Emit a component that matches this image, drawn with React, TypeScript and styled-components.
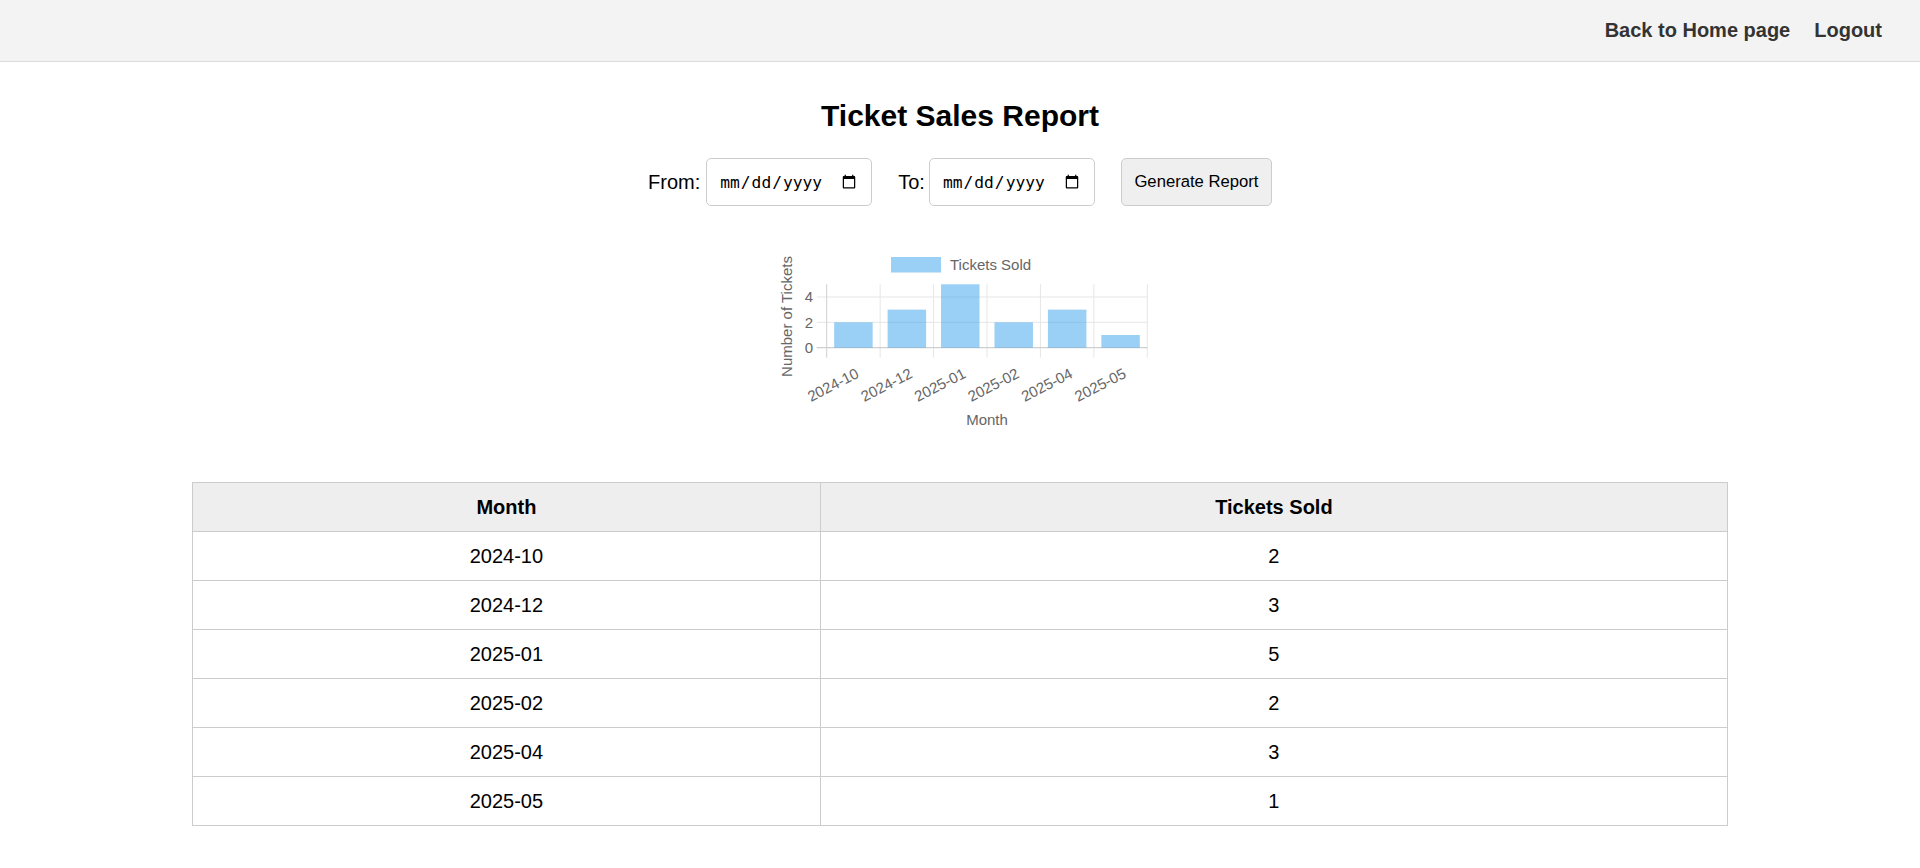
import React from 'react';
import styled, { createGlobalStyle } from 'styled-components';

const GlobalStyle = createGlobalStyle`
  html, body { margin: 0; padding: 0; background: #fff; }
  body { font-family: "Liberation Sans", Arial, Helvetica, sans-serif; color: #000; }
`;

const NavBar = styled.header`
  display: flex;
  justify-content: flex-end;
  align-items: center;
  gap: 24px;
  height: 62px;
  padding: 0 38px 0;
  box-sizing: border-box;
  background: #f3f3f3;
  border-bottom: 1px solid #dcdcdc;
`;

const NavLink = styled.a`
  font-size: 20px;
  font-weight: bold;
  color: #333;
  text-decoration: none;
  cursor: pointer;
`;

const Main = styled.main`
  padding-top: 12px;
  text-align: center;
`;

const Title = styled.h2`
  font-size: 30px;
  font-weight: bold;
  margin: 25px 0;
  line-height: normal;
`;

const FilterRow = styled.div`
  display: flex;
  justify-content: center;
  align-items: center;
`;

const Field = styled.div<{ $gap: number }>`
  display: flex;
  align-items: center;
  gap: ${(p) => p.$gap}px;
  margin-right: 26px;
`;

const FieldLabel = styled.label`
  font-size: 20px;
`;

const DateInput = styled.input`
  width: 166px;
  height: 48px;
  box-sizing: border-box;
  border: 1px solid #ccc;
  border-radius: 5px;
  padding: 0 12px 0 12px;
  font-family: "DejaVu Sans Mono", monospace;
  font-size: 16.25px;
  color: #000;
  background: #fff;
`;

const ActionButton = styled.button`
  height: 48px;
  box-sizing: border-box;
  padding: 0 12.5px;
  font-family: "Liberation Sans", Arial, sans-serif;
  font-size: 16.67px;
  color: #000;
  background: #efefef;
  border: 1px solid #ccc;
  border-radius: 5px;
`;

const ChartWrap = styled.div`
  display: flex;
  justify-content: center;
  margin-top: 37.5px;
`;

const ChartSvg = styled.svg`
  display: block;
  font-family: "Liberation Sans", Arial, Helvetica, sans-serif;
`;

const Table = styled.table`
  width: 80%;
  margin: 50.5px auto 0;
  border-collapse: collapse;
  font-size: 20px;
`;

const HeadCell = styled.th<{ $w?: string }>`
  width: ${(p) => p.$w ?? 'auto'};
  background: #eeeeee;
  border: 1px solid #ccc;
  padding: 12.5px;
  font-weight: bold;
  text-align: center;
`;

const Cell = styled.td`
  border: 1px solid #ccc;
  padding: 12.5px;
  text-align: center;
`;

const data = [
  { month: '2024-10', sold: 2 },
  { month: '2024-12', sold: 3 },
  { month: '2025-01', sold: 5 },
  { month: '2025-02', sold: 2 },
  { month: '2025-04', sold: 3 },
  { month: '2025-05', sold: 1 },
];

const BarChart: React.FC = () => {
  const W = 376;
  const H = 188;
  const left = 54.7;
  const right = 375.3;
  const top = 40.3;
  const bottom = 103.7;
  const unit = (bottom - top) / 5;
  const cat = (right - left) / data.length;
  const barW = cat * 0.72;
  const grid = '#e6e6e6';
  const axis = '#cfcfcf';
  const text = '#666';
  return (
    <ChartSvg width={W} height={H} viewBox={`0 0 ${W} ${H}`}>
      {/* legend */}
      <rect x={119} y={13} width={50} height={15.5} fill="rgba(54,162,235,0.5)" />
      <text x={178} y={20.5} fontSize={15} fill={text} dominantBaseline="central">Tickets Sold</text>
      {/* y title */}
      <text
        transform={`translate(14.7, 72.5) rotate(-90)`}
        fontSize={15}
        fill={text}
        textAnchor="middle"
        dominantBaseline="central"
      >
        Number of Tickets
      </text>
      {/* horizontal grid */}
      {[4, 2].map((v) => (
        <line key={v} x1={left - 10} x2={right} y1={bottom - v * unit} y2={bottom - v * unit} stroke={grid} strokeWidth={1} />
      ))}
      {/* vertical grid */}
      {Array.from({ length: data.length + 1 }).map((_, i) => (
        <line
          key={i}
          x1={left + i * cat}
          x2={left + i * cat}
          y1={top}
          y2={bottom + 10}
          stroke={i === 0 ? axis : grid}
          strokeWidth={1}
        />
      ))}
      <line x1={left - 10} x2={right} y1={bottom} y2={bottom} stroke={axis} strokeWidth={1.2} />
      {/* y ticks */}
      {[4, 2, 0].map((v) => (
        <text key={v} x={41} y={bottom - v * unit} fontSize={15} fill={text} textAnchor="end" dominantBaseline="central">
          {v}
        </text>
      ))}
      {/* bars */}
      {data.map((d, i) => {
        const cx = left + cat * (i + 0.5);
        const h = d.sold * unit;
        return <rect key={d.month} x={cx - barW / 2} y={bottom - h} width={barW} height={h} fill="rgba(54,162,235,0.5)" />;
      })}
      {/* x labels */}
      {data.map((d, i) => {
        const cx = left + cat * (i + 0.5);
        return (
          <text
            key={d.month}
            transform={`translate(${cx}, 120) rotate(-27)`}
            y={9}
            fontSize={15}
            fill={text}
            textAnchor="end"
            dominantBaseline="central"
          >
            {d.month}
          </text>
        );
      })}
      <text x={(left + right) / 2} y={175} fontSize={15} fill={text} textAnchor="middle" dominantBaseline="central">
        Month
      </text>
    </ChartSvg>
  );
};

export default function App() {
  return (
    <>
      <GlobalStyle />
      <NavBar>
        <NavLink>Back to Home page</NavLink>
        <NavLink>Logout</NavLink>
      </NavBar>
      <Main>
        <Title>Ticket Sales Report</Title>
        <FilterRow>
          <Field $gap={6}>
            <FieldLabel htmlFor="from">From:</FieldLabel>
            <DateInput id="from" type="date" />
          </Field>
          <Field $gap={4}>
            <FieldLabel htmlFor="to">To:</FieldLabel>
            <DateInput id="to" type="date" />
          </Field>
          <ActionButton>Generate Report</ActionButton>
        </FilterRow>
        <ChartWrap>
          <BarChart />
        </ChartWrap>
        <Table>
          <thead>
            <tr>
              <HeadCell $w="40.9%">Month</HeadCell>
              <HeadCell>Tickets Sold</HeadCell>
            </tr>
          </thead>
          <tbody>
            {data.map((d) => (
              <tr key={d.month}>
                <Cell>{d.month}</Cell>
                <Cell>{d.sold}</Cell>
              </tr>
            ))}
          </tbody>
        </Table>
      </Main>
    </>
  );
}
